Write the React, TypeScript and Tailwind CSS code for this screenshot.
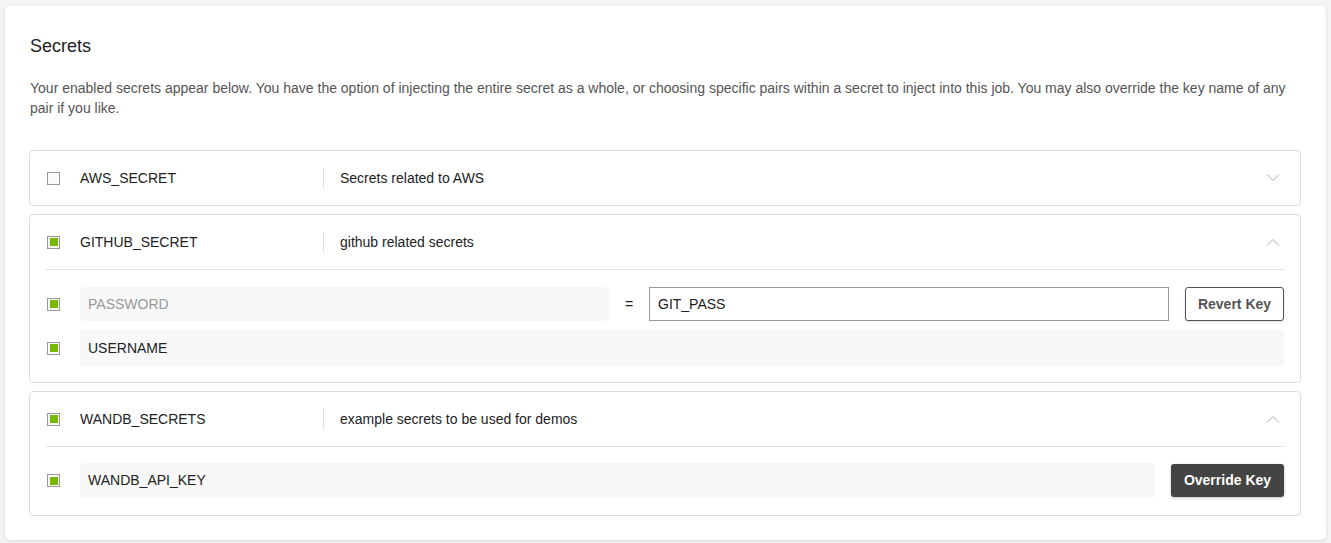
import React from 'react';

const Checkbox: React.FC<{ checked?: boolean }> = ({ checked }) => (
  <div className="w-[13px] h-[13px] shrink-0 border border-[#999] bg-[#fafafa] flex items-center justify-center">
    {checked && <div className="w-[8px] h-[8px] bg-[#76b900]"></div>}
  </div>
);

const Chevron: React.FC<{ up?: boolean }> = ({ up }) => (
  <svg width="14" height="8" viewBox="0 0 14 8" className="mr-[4px]">
    <path
      d={up ? 'M1 7.5 L7 1.5 L13 7.5' : 'M1 0.5 L7 6.5 L13 0.5'}
      fill="none"
      stroke="#aaa"
      strokeWidth="1"
    />
  </svg>
);

interface SecretHeaderProps {
  name: string;
  description: string;
  checked?: boolean;
  open?: boolean;
}

const SecretHeader: React.FC<SecretHeaderProps> = ({ name, description, checked, open }) => (
  <div className={`flex items-center ${open ? 'h-[55px] border-b border-[#e3e3e3]' : 'h-[54px]'}`}>
    <div className="pl-px">
      <Checkbox checked={checked} />
    </div>
    <div className="w-[263px] pl-[20px] text-[14px] text-[#222]">{name}</div>
    <div className="w-px h-[20px] bg-[#ddd]"></div>
    <div className="flex-1 pl-[16px] text-[14px] text-[#222]">{description}</div>
    <Chevron up={open} />
  </div>
);

const App: React.FC = () => {
  return (
    <div className="min-h-[543px] bg-[#f4f4f4] p-[5px] pt-[6px] font-['Liberation_Sans',Arial,sans-serif]">
      <div className="bg-white rounded-[5px] shadow-[0_1px_3px_rgba(0,0,0,0.12)] pl-[24px] pr-[25px] pt-[24px] pb-[24px]">
        <h2 className="text-[18px] leading-[32px] text-[#222] pl-px">Secrets</h2>
        <p className="mt-[16px] text-[14px] leading-[20px] text-[#555] pl-px">
          Your enabled secrets appear below. You have the option of injecting the entire secret as a whole, or choosing specific pairs within a secret to inject into this job. You may also override the key name of any pair if you like.
        </p>

        <div className="mt-[32px] flex flex-col gap-[8px]">
          {/* AWS */}
          <div className="border border-[#ddd] rounded-[4px] px-[16px]">
            <SecretHeader name="AWS_SECRET" description="Secrets related to AWS" />
          </div>

          {/* GITHUB */}
          <div className="border border-[#ddd] rounded-[4px] px-[16px] pb-[16px]">
            <SecretHeader name="GITHUB_SECRET" description="github related secrets" checked open />
            <div className="pt-[17px] flex flex-col gap-[9px]">
              <div className="flex items-center">
                <div className="pl-px w-[34px]">
                  <Checkbox checked />
                </div>
                <div className="w-[529px] h-[34px] rounded-[4px] bg-[#f8f8f8] px-[8px] flex items-center text-[14px] text-[#999]">
                  PASSWORD
                </div>
                <div className="w-[40px] text-center text-[14px] text-[#222]">=</div>
                <div className="flex-1 h-[34px] border border-[#999] px-[8px] flex items-center text-[14px] text-[#222]">
                  GIT_PASS
                </div>
                <button className="ml-[16px] w-[99px] h-[34px] rounded-[3px] border border-[#555] bg-white text-[14px] font-bold text-[#555] shadow-[0_1px_2px_rgba(0,0,0,0.15)]">
                  Revert Key
                </button>
              </div>
              <div className="flex items-center">
                <div className="pl-px w-[34px]">
                  <Checkbox checked />
                </div>
                <div className="flex-1 h-[36px] rounded-[4px] bg-[#f8f8f8] px-[8px] flex items-center text-[14px] text-[#222]">
                  USERNAME
                </div>
              </div>
            </div>
          </div>

          {/* WANDB */}
          <div className="border border-[#ddd] rounded-[4px] px-[16px] pb-[17px]">
            <SecretHeader name="WANDB_SECRETS" description="example secrets to be used for demos" checked open />
            <div className="pt-[16px]">
              <div className="flex items-center">
                <div className="pl-px w-[34px]">
                  <Checkbox checked />
                </div>
                <div className="flex-1 h-[35px] rounded-[4px] bg-[#f8f8f8] px-[8px] flex items-center text-[14px] text-[#222]">
                  WANDB_API_KEY
                </div>
                <button className="ml-[16px] w-[113px] h-[33px] rounded-[3px] bg-[#444] text-[14px] font-bold text-white shadow-[0_1px_3px_rgba(0,0,0,0.25)]">
                  Override Key
                </button>
              </div>
            </div>
          </div>
        </div>
      </div>
    </div>
  );
};

export default App;
